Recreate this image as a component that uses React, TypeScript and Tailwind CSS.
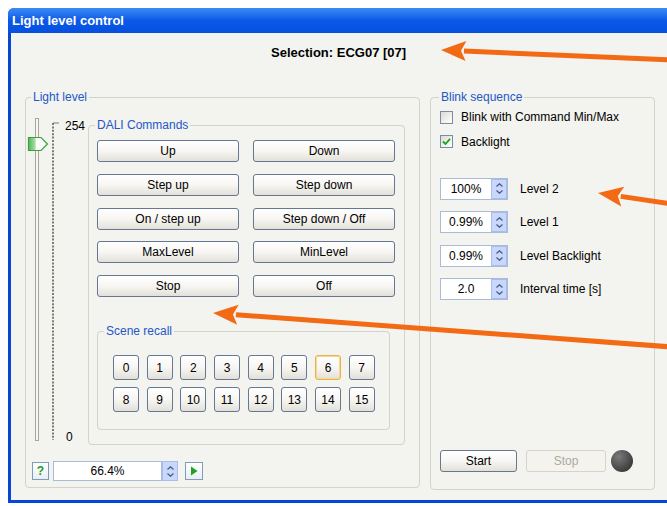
import React from "react";

const daliCommands = [
  ["Up", "Down"],
  ["Step up", "Step down"],
  ["On / step up", "Step down / Off"],
  ["MaxLevel", "MinLevel"],
  ["Stop", "Off"],
];

const blinkValues = [
  { value: "100%", label: "Level 2" },
  { value: "0.99%", label: "Level 1" },
  { value: "0.99%", label: "Level Backlight" },
  { value: "2.0", label: "Interval time [s]" },
];

function XpButton({ label, className = "", hot = false }: { label: string; className?: string; hot?: boolean }) {
  return (
    <button
      className={
        "flex items-center justify-center rounded-[3px] border bg-linear-to-b from-white via-[#f7f6f3] to-[#e2e0d8] text-[12px] leading-none text-black " +
        (hot ? "border-[#e3b34f] shadow-[inset_0_0_0_1px_#f6d98c] " : "border-[#66778f] ") +
        className
      }
    >
      {label}
    </button>
  );
}

function SpinArrows() {
  return (
    <div className="flex w-[16px] flex-col items-center justify-center gap-[3px] border border-[#a8bdec] bg-[#c8d7fb]">
      <svg width="7" height="4" viewBox="0 0 7 4">
        <path d="M0.5 3.5 L3.5 0.8 L6.5 3.5" fill="none" stroke="#4a5f86" strokeWidth="1.3" />
      </svg>
      <svg width="7" height="4" viewBox="0 0 7 4">
        <path d="M0.5 0.5 L3.5 3.2 L6.5 0.5" fill="none" stroke="#4a5f86" strokeWidth="1.3" />
      </svg>
    </div>
  );
}

function Checkbox({ label, checked }: { label: string; checked?: boolean }) {
  return (
    <div className="flex h-[16px] items-center gap-[8px]">
      <div className="flex h-[13px] w-[13px] items-center justify-center border border-[#7a8ba5] bg-linear-to-br from-[#dcdcd4] to-white">
        {checked && (
          <svg width="9" height="9" viewBox="0 0 9 9">
            <path d="M1 4.5 L3.5 7 L8 1.8" fill="none" stroke="#21a121" strokeWidth="1.8" />
          </svg>
        )}
      </div>
      <span className="text-[12px] text-black">{label}</span>
    </div>
  );
}

function Slider() {
  return (
    <div className="flex h-[341px] w-[62px]">
      <svg width="36" height="341" viewBox="0 0 36 341">
        <rect x="9.5" y="14.5" width="3" height="322" fill="#f6f6f3" stroke="#a7a79c" />
        <line x1="27" y1="19" x2="27" y2="336" stroke="#7c7c74" strokeWidth="2" strokeDasharray="2 1.4" />
        <line x1="27" y1="19" x2="33" y2="19" stroke="#7c7c74" strokeWidth="1" />
        <defs>
          <linearGradient id="thumb" x1="0" x2="1" y1="0" y2="0">
            <stop offset="0" stopColor="#56b656" />
            <stop offset="0.35" stopColor="#a8dca8" />
            <stop offset="0.4" stopColor="#ffffff" />
            <stop offset="1" stopColor="#f1f1ec" />
          </linearGradient>
        </defs>
        <path d="M2.5 33.5 H15 L21.5 40 L15 46.5 H2.5 Z" fill="url(#thumb)" stroke="#3f9f3f" strokeWidth="1.2" />
      </svg>
      <div className="flex flex-1 flex-col justify-between pb-[1px] pl-[3px] pt-[15px] text-[12px] leading-[14px] text-black">
        <span>254</span>
        <span className="pl-[1px]">0</span>
      </div>
    </div>
  );
}

function Arrow({ tail, tip }: { tail: [number, number]; tip: [number, number] }) {
  const [tx, ty] = tail;
  const [hx, hy] = tip;
  const len = Math.hypot(tx - hx, ty - hy);
  const ux = (tx - hx) / len;
  const uy = (ty - hy) / len;
  const headLen = 25;
  const half = 10;
  const bx = hx + ux * headLen;
  const by = hy + uy * headLen;
  const px = -uy;
  const py = ux;
  return (
    <g>
      <line x1={tx} y1={ty} x2={bx - ux * 2} y2={by - uy * 2} stroke="#f26a14" strokeWidth="5" />
      <polygon
        points={`${hx},${hy} ${bx + px * half},${by + py * half} ${bx - ux * 5},${by - uy * 5} ${bx - px * half},${by - py * half}`}
        fill="#f26a14"
      />
    </g>
  );
}

export default function App() {
  return (
    <div className="relative h-[506px] w-[667px] overflow-hidden bg-white font-['Liberation_Sans',Arial,sans-serif]">
      <div className="ml-[8px] mt-[8px] flex h-[495px] w-[700px] flex-col rounded-t-[6px] bg-[#0847d6]">
        <div className="flex h-[25px] items-center rounded-t-[6px] bg-linear-to-b from-[#3d8af5] via-[#0b58e8] to-[#0650de] pl-[4px] text-[13px] font-bold text-white">
          Light level control
        </div>

        <div className="mb-[3px] ml-[3px] flex-1 bg-[#f3f3ef]">
          <div className="h-[57px] pl-[260px] pt-[12px] text-[13px] font-bold leading-[15px] text-black">
            Selection: ECG07 [07]
          </div>

          <div className="flex gap-[10px] pl-[14px]">
            <fieldset className="h-[398px] w-[395px] rounded-[4px] border border-[#d3d3c7]">
              <legend className="ml-[5px] px-[2px] text-[12px] leading-[14px] text-[#2457c8]">Light level</legend>
              <div className="flex">
                <Slider />
                <fieldset className="mt-[14px] h-[327px] w-[317px] rounded-[4px] border border-[#d3d3c7]">
                  <legend className="ml-[6px] px-[2px] text-[12px] leading-[14px] text-[#2457c8]">DALI Commands</legend>
                  <div className="ml-[8px] mt-[8px] grid w-[298px] grid-cols-[142px_142px] gap-x-[14px] gap-y-[11.75px]">
                    {daliCommands.flat().map((label) => (
                      <XpButton key={label} label={label} className="h-[22px]" />
                    ))}
                  </div>
                  <fieldset className="ml-[8px] mt-[27px] h-[106px] w-[293px] rounded-[4px] border border-[#d3d3c7]">
                    <legend className="ml-[6px] px-[2px] text-[12px] leading-[14px] text-[#2457c8]">Scene recall</legend>
                    <div className="ml-[15px] mt-[17px] grid w-[262px] grid-cols-8 gap-x-[7.4px] gap-y-[7px]">
                      {Array.from({ length: 16 }, (_, i) => (
                        <XpButton key={i} label={String(i)} hot={i === 6} className="h-[25px] w-[26px]" />
                      ))}
                    </div>
                  </fieldset>
                </fieldset>
              </div>

              <div className="ml-[6px] mt-[17px] flex h-[18px] items-center">
                <div className="flex h-[18px] w-[17px] items-center justify-center border border-[#7f9db9] bg-linear-to-b from-white to-[#e9eef6] text-[12px] font-bold text-[#1f9a1f]">
                  ?
                </div>
                <div className="ml-[4px] flex h-[20px]">
                  <div className="flex w-[109px] items-center justify-center border border-[#a9bcd6] bg-white text-[12px] text-black">
                    66.4%
                  </div>
                  <div className="flex w-[21px]">
                    <SpinArrows />
                  </div>
                </div>
                <div className="ml-[2px] flex h-[18px] w-[18px] items-center justify-center border border-[#7f9db9] bg-linear-to-b from-white to-[#e9eef6]">
                  <svg width="8" height="10" viewBox="0 0 8 10">
                    <path d="M1 0.5 L7.5 5 L1 9.5 Z" fill="#22a022" />
                  </svg>
                </div>
              </div>
            </fieldset>

            <fieldset className="flex h-[400px] w-[225px] flex-col rounded-[4px] border border-[#d3d3c7]">
              <legend className="ml-[8px] px-[2px] text-[12px] leading-[14px] text-[#2457c8]">Blink sequence</legend>
              <div className="flex h-[384px] flex-col pl-[9px]">
                <div className="mt-[5px] flex flex-col gap-[8.5px]">
                  <Checkbox label="Blink with Command Min/Max" />
                  <Checkbox label="Backlight" checked />
                </div>
                <div className="mt-[28px] flex flex-col gap-[11.5px]">
                  {blinkValues.map((row) => (
                    <div key={row.label} className="flex h-[22px] items-center">
                      <div className="flex h-[22px] border border-[#a9bcd6] bg-white">
                        <div className="flex w-[50px] items-center justify-center text-[12px] text-black">{row.value}</div>
                        <SpinArrows />
                      </div>
                      <span className="ml-[12px] text-[12px] text-black">{row.label}</span>
                    </div>
                  ))}
                </div>
                <div className="mt-auto mb-[16px] flex items-center">
                  <XpButton label="Start" className="h-[22px] w-[77px]" />
                  <div className="ml-[9px] flex h-[22px] w-[80px] items-center justify-center rounded-[3px] border border-[#d6d4c8] bg-[#f4f3ee] text-[12px] text-[#aeab9c]">
                    Stop
                  </div>
                  <div className="ml-[5px] h-[22px] w-[22px] rounded-full bg-radial-[at_35%_30%] from-[#7a7a7a] to-[#262626]" />
                </div>
              </div>
            </fieldset>
          </div>
        </div>
      </div>

      <svg className="pointer-events-none absolute inset-0" width="667" height="506" viewBox="0 0 667 506">
        <Arrow tail={[672, 60]} tip={[441, 50]} />
        <Arrow tail={[672, 204]} tip={[598, 193]} />
        <Arrow tail={[672, 347]} tip={[213, 313]} />
      </svg>
    </div>
  );
}
